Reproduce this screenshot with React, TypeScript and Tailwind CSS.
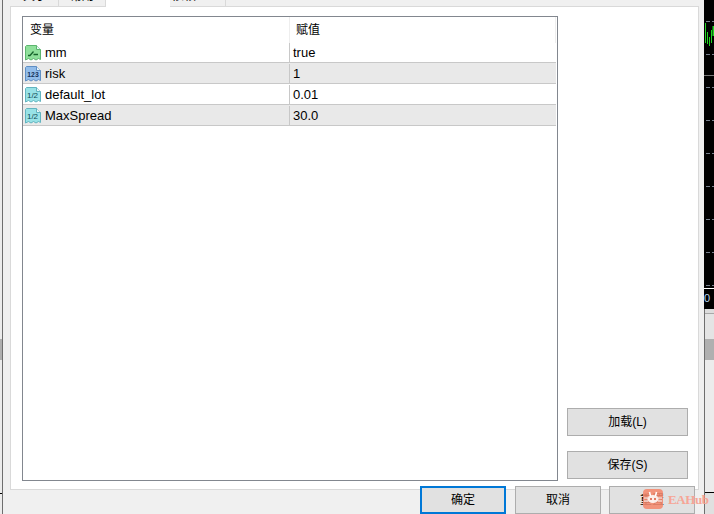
const UI_FONT = "font-['Liberation_Sans','Noto_Sans_CJK_SC',sans-serif]";

type ParamKind = "bool" | "int" | "real";

interface Param {
  name: string;
  value: string;
  kind: ParamKind;
}

const PARAMS: Param[] = [
  { name: "mm", value: "true", kind: "bool" },
  { name: "risk", value: "1", kind: "int" },
  { name: "default_lot", value: "0.01", kind: "real" },
  { name: "MaxSpread", value: "30.0", kind: "real" },
];

// little document icon with a folded corner and a torn bottom edge
function ParamIcon({ kind }: { kind: ParamKind }) {
  const fill = kind === "bool" ? "#8fe09b" : kind === "int" ? "#92bdea" : "#98e2e6";
  const stroke = kind === "bool" ? "#5cb56f" : kind === "int" ? "#5f8fc4" : "#62b4c0";
  return (
    <svg width="16" height="16" viewBox="0 0 16 16" className="shrink-0">
      <path
        d="M1.5 0.5H11.5L15.5 4.5V14.5L13.5 13.5L11 15L8.5 13.5L6 15L3.5 13.5L0.5 15V1.5Z"
        fill={fill}
        stroke={stroke}
      />
      <path d="M11.5 0.5V4.5H15.5" fill="#e8f6f8" stroke={stroke} />
      {kind === "bool" && <path d="M3 10.5L5 10.5L8.5 6.5M8.5 9.5H13" fill="none" stroke="#17632b" strokeWidth="1.3" />}
      {kind === "int" && (
        <text x="8" y="10.5" textAnchor="middle" fontSize="6.8" fontWeight="700" fontFamily="Liberation Sans" fill="#12325c">
          123
        </text>
      )}
      {kind === "real" && (
        <text x="7.5" y="10.5" textAnchor="middle" fontSize="8" fontFamily="Liberation Sans" fill="#0f4a55">
          1/2
        </text>
      )}
    </svg>
  );
}

function ChartStrip() {
  const dashes = [21, 54, 87, 120, 153, 186, 219, 252, 285];
  return (
    <svg width="10" height="309" viewBox="0 0 10 309" className="block">
      <rect width="10" height="309" fill="#000" />
      {dashes.map((y) => (
        <path key={y} d={`M2 ${y + 0.5}H6M8 ${y + 0.5}H10`} stroke="#77808c" />
      ))}
      <path d="M1.5 23V43M3.5 32V44M5.5 37V46M7.5 30V43" stroke="#22d422" />
      <path d="M9.5 26V36" stroke="#22d422" strokeWidth="2" />
      <path d="M0 75.5H10" stroke="#777" />
      <path d="M0 288.5H10" stroke="#fff" />
      <text x="0" y="302" fontSize="11" fontFamily="Liberation Sans" fill="#b9d7ee">
        0
      </text>
    </svg>
  );
}

function DialogButton({ label, focused }: { label: string; focused?: boolean }) {
  return (
    <div
      className={`flex h-[28px] w-[86px] shrink-0 items-center justify-center bg-[#e1e1e1] text-[12px] text-black ${
        focused ? "border-2 border-[#0078d7]" : "border border-[#adadad]"
      }`}
    >
      {label}
    </div>
  );
}

function SideButton({ label }: { label: string }) {
  return (
    <div className="flex h-[28px] w-[121px] items-center justify-center border border-[#adadad] bg-[#e1e1e1] text-[12px] text-black">
      {label}
    </div>
  );
}

function Tab({ label, width, active }: { label: string; width: string; active?: boolean }) {
  if (active) {
    return <div className={`h-[7px] bg-white ${width}`} />;
  }
  return (
    <div className={`flex h-[6px] justify-center overflow-hidden border-r border-[#d9d9d9] bg-[#f0f0f0] ${width}`}>
      <span className="-mt-[12px] text-[12px] leading-[16px] text-black">{label}</span>
    </div>
  );
}

function Watermark() {
  return (
    <div className="absolute bottom-[5px] left-[643px] z-20 flex items-center gap-[5px]">
      <svg width="20" height="20" viewBox="0 0 20 20">
        <rect width="20" height="20" rx="4" fill="#f4876c" fillOpacity="0.88" />
        <path d="M6.5 3L7.5 7M13.5 3L12.5 7" stroke="#fff" strokeWidth="1.6" />
        <ellipse cx="10" cy="10" rx="5.5" ry="4" fill="#fff" fillOpacity="0.85" />
        <circle cx="8" cy="10" r="1" fill="#d9553a" />
        <circle cx="12" cy="10" r="1" fill="#d9553a" />
        <path d="M1 9H5M1 12H5M15 9H19M15 12H19" stroke="#fff" />
      </svg>
      <span className="font-['Liberation_Serif',serif] text-[13px] leading-none font-bold tracking-[-0.4px] text-[#f6a596]">EAHub</span>
    </div>
  );
}

export default function App() {
  return (
    <div className={`relative flex h-[514px] w-[714px] overflow-hidden bg-[#f0f0f0] ${UI_FONT}`}>
      {/* sliver of the terminal on the left */}
      <div className="flex w-[3px] shrink-0 flex-col border-r border-[#6e6e6e] bg-[#ececec]">
        <div className="h-[339px]" />
        <div className="h-[21px] bg-[#b0b0b0]" />
        <div className="h-[133px]" />
        <div className="h-px bg-black" />
      </div>

      {/* dialog */}
      <div className="flex w-[701px] shrink-0 flex-col pl-[7px]">
        <div className="relative z-10 -mb-px flex items-start pl-[2px]">
          <Tab label="关于" width="w-[47px]" />
          <Tab label="常用" width="w-[47px]" />
          <Tab label="输入参数" width="w-[64px]" active />
          <Tab label="依赖 Past" width="w-[56px]" />
        </div>
        <div className="flex h-[485px] w-[689px] gap-[9px] border border-[#d9d9d9] bg-white pt-[9px] pr-[9px] pb-[8px] pl-[11px]">
          {/* inputs list */}
          <div className="flex w-[536px] flex-col border border-[#82878f] bg-white pr-px text-[13px] text-black">
            <div className="flex h-[26px] shrink-0 text-[12px]">
              <div className="flex w-[266px] items-center pl-[7px]">变量</div>
              <div className="w-px bg-[#eeeeee]" />
              <div className="flex flex-1 items-center border-r border-[#eeeeee] pl-[6px]">赋值</div>
            </div>
            {PARAMS.map((p, i) => (
              <div
                key={p.name}
                className={`flex shrink-0 border-b border-[#c8c8c8] ${i === 0 ? "h-[20px]" : "h-[21px] pt-px"} ${
                  i % 2 === 1 ? "bg-[#e9e9e9]" : "bg-white"
                }`}
              >
                <div className="flex w-[266px] items-center gap-[4px] pl-[2px]">
                  <ParamIcon kind={p.kind} />
                  <span>{p.name}</span>
                </div>
                <div className="w-px bg-[#c8c8c8]" />
                <div className="flex flex-1 items-center pl-[3px]">{p.value}</div>
              </div>
            ))}
          </div>

          {/* load / save */}
          <div className="flex w-[121px] flex-col justify-end gap-[15px] pb-[2px]">
            <SideButton label="加载(L)" />
            <SideButton label="保存(S)" />
          </div>
        </div>

        {/* OK / cancel / reset, cut off by the bottom of the shot */}
        <div className="relative z-10 -mt-[4px] flex gap-[9px] pl-[410px]">
          <DialogButton label="确定" focused />
          <DialogButton label="取消" />
          <div className="-ml-px">
            <DialogButton label="重置" />
          </div>
        </div>
      </div>

      {/* sliver of the terminal on the right */}
      <div className="flex w-[10px] shrink-0 flex-col bg-[#e4e4e4]">
        <ChartStrip />
        <div className="flex flex-1 flex-col border-l border-[#6e6e6e]">
          <div className="h-[5px] border-b border-[#a8a8a8] bg-[#dddddd]" />
          <div className="h-[25px] bg-[#e4e4e4]" />
          <div className="h-[21px] bg-[#b0b0b0]" />
          <div className="h-[133px] border-b border-black bg-[#ececec]" />
          <div className="h-[21px] bg-[#e0e0e0]" />
        </div>
      </div>

      <Watermark />
    </div>
  );
}
